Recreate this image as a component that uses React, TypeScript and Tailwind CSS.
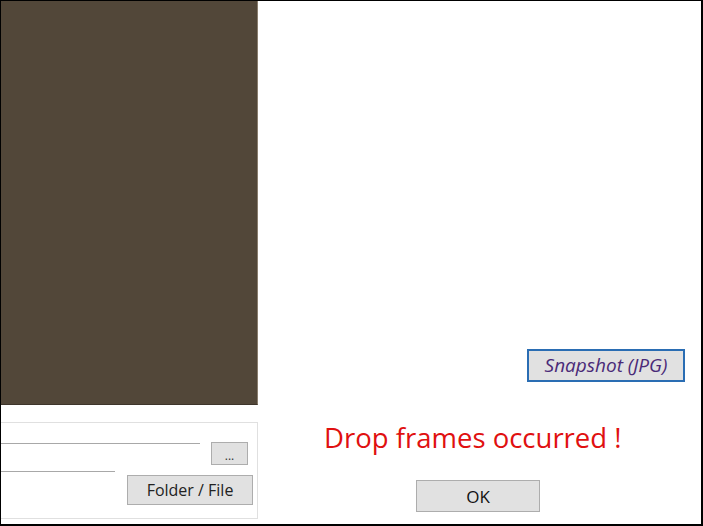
import React from "react";

export default function App() {
  const font = { fontFamily: '"Open Sans", "Noto Sans", sans-serif' };
  return (
    <div
      className="w-[703px] h-[526px] bg-white border-t border-l border-r-2 border-b-2 border-black flex overflow-hidden"
      style={font}
    >
      {/* Left column */}
      <div className="w-[257px] flex flex-col shrink-0">
        <div className="h-[404px] bg-[#524739] border-r border-[#8a7e6e] border-b border-b-[#3e352b]" />
        <div className="mt-[17px] h-[97px] border border-l-0 border-[#e0e0e0] relative flex flex-col">
          <div className="flex items-start mt-[19px]">
            <div className="w-[199px] h-px bg-[#a8a8a8] mt-[1px]" />
            <button className="ml-[11px] w-[37px] h-[23px] bg-[#e1e1e1] border border-[#adadad] text-[12px] leading-none text-[#333] pt-[4px]">
              ...
            </button>
          </div>
          <div className="flex items-start mt-[6px]">
            <div className="w-[114px] h-px bg-[#a8a8a8]" />
          </div>
          <div className="flex justify-end mt-[3px] pr-[4px]">
            <button className="w-[126px] h-[30px] bg-[#e1e1e1] border border-[#adadad] text-[16px] text-[#222] leading-none">
              Folder / File
            </button>
          </div>
        </div>
      </div>
      {/* Right column */}
      <div className="flex-1 flex flex-col">
        <div className="h-[348px]" />
        <div className="flex justify-end pr-[16px]">
          <button className="w-[158px] h-[33px] bg-[#e1e1e1] border-2 border-[#2a6db3] italic text-[19px] text-[#4a2a78] leading-none">
            Snapshot (JPG)
          </button>
        </div>
        <div className="mt-[42px] pl-[66px] text-[27.5px] leading-[28px] text-[#e01010] whitespace-nowrap">
          Drop frames occurred !
        </div>
        <div className="mt-[28px] flex pl-[158px]">
          <button className="w-[124px] h-[32px] bg-[#e1e1e1] border border-[#adadad] text-[17px] text-[#111] leading-none">
            OK
          </button>
        </div>
      </div>
    </div>
  );
}
